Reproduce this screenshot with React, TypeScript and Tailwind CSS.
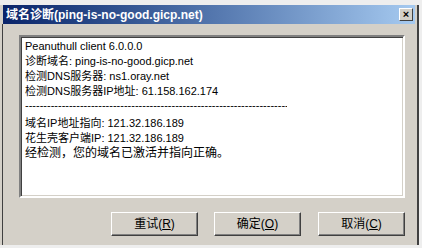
import React from "react";

const FONT = '"Liberation Sans", "Noto Sans CJK SC", sans-serif';

function Btn({ label, k }: { label: string; k: string }) {
  return (
    <div className="w-[87px] h-[24px] border border-t-white border-l-white border-r-[#404040] border-b-[#404040] shadow-[inset_-1px_-1px_0_#808080] flex items-center justify-center text-[12px] text-black">
      <span>
        {label}(<span className="underline">{k}</span>)
      </span>
    </div>
  );
}

export default function App() {
  return (
    <div className="w-[422px] h-[248px] bg-[#eeeeee] overflow-hidden" style={{ fontFamily: FONT }}>
      <div className="mt-[5px] w-[419px] h-[240px] flex flex-col bg-[#d4d0c8] border-r-2 border-r-[#404040]">
        <div className="ml-[3px] mr-[2px] h-[19px] flex items-center justify-between bg-gradient-to-r from-[#0a246a] to-[#a6caf0] pl-[3px] pr-[2px]">
          <span className="text-white font-bold text-[12px] leading-none">域名诊断(ping-is-no-good.gicp.net)</span>
          <div className="w-[14px] h-[13px] bg-[#d4d0c8] border border-t-white border-l-white border-r-[#404040] border-b-[#404040] flex items-center justify-center text-[11px] font-bold leading-none text-black">
            ×
          </div>
        </div>
        <div className="flex-1 ml-[2px] border-l border-[#404040] flex flex-col">
          <div className="ml-[16px] mt-[11px] w-[386px] h-[163px] bg-white border-2 border-t-[#808080] border-l-[#808080] border-r-white border-b-white shadow-[inset_1px_1px_0_#404040,inset_-1px_-1px_0_#d4d0c8] pl-[4px] pt-[2px] text-[11px] leading-[15px] text-black">
            <div>Peanuthull client 6.0.0.0</div>
            <div>诊断域名: ping-is-no-good.gicp.net</div>
            <div>检测DNS服务器: ns1.oray.net</div>
            <div>检测DNS服务器IP地址: 61.158.162.174</div>
            <div className="w-[262px] overflow-hidden whitespace-nowrap leading-[12px]">
              ----------------------------------------------------------------------------------------
            </div>
            <div className="h-[5px]" />
            <div>域名IP地址指向: 121.32.186.189</div>
            <div>花生壳客户端IP: 121.32.186.189</div>
            <div className="text-[12px]">经检测，您的域名已激活并指向正确。</div>
          </div>
          <div className="flex ml-[108px] mt-[14px] gap-[16px]">
            <Btn label="重试" k="R" />
            <Btn label="确定" k="O" />
            <div className="ml-[1px]">
              <Btn label="取消" k="C" />
            </div>
          </div>
        </div>
      </div>
    </div>
  );
}
